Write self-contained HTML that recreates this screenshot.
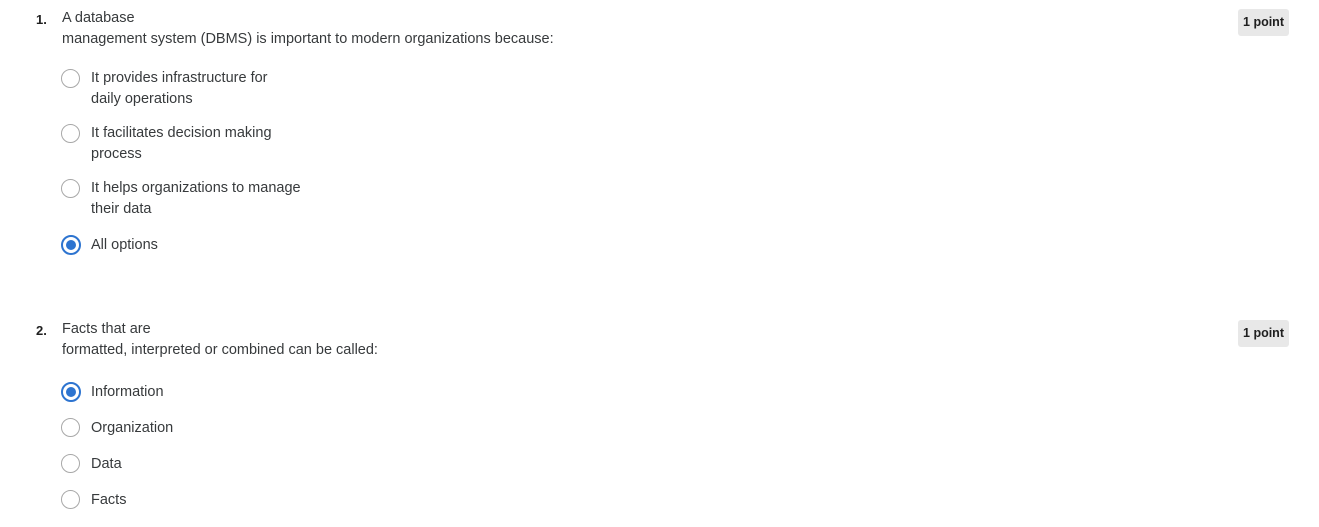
<!DOCTYPE html>
<html><head><meta charset="utf-8"><style>
body{margin:0;width:1319px;height:527px;background:#fff;font-family:"Liberation Sans",sans-serif;color:#373a3c;position:relative;overflow:hidden}
.t{position:absolute;font-size:14.5px;line-height:21px;white-space:nowrap}
.n{position:absolute;font-size:13px;font-weight:bold;color:#1f1f1f}
.b{position:absolute;left:1238px;width:51px;height:27px;background:#e8e8e8;border-radius:3px;font-size:12.5px;font-weight:bold;color:#1f1f1f;text-align:center;line-height:27px}
.r{position:absolute;left:61px;width:17px;height:17px;border:1.5px solid #a8a8a8;border-radius:50%;background:#fff}
.r.s{border:2px solid #2d74d0;width:16px;height:16px}
.r.s::after{content:"";position:absolute;left:3px;top:3px;width:10px;height:10px;border-radius:50%;background:#2d74d0}
</style></head><body>
<div class="n" style="left:36px;top:12px">1.</div>
<div class="t" style="left:62px;top:8px">A database<br>management system (DBMS) is important to modern organizations because:</div>
<div class="b" style="top:9px">1 point</div>
<div class="r" style="top:69px"></div><div class="t" style="left:91px;top:68px">It provides infrastructure for<br>daily operations</div>
<div class="r" style="top:124px"></div><div class="t" style="left:91px;top:123px">It facilitates decision making<br>process</div>
<div class="r" style="top:179px"></div><div class="t" style="left:91px;top:178px">It helps organizations to manage<br>their data</div>
<div class="r s" style="top:235px"></div><div class="t" style="left:91px;top:235px">All options</div>

<div class="n" style="left:36px;top:323px">2.</div>
<div class="t" style="left:62px;top:319px">Facts that are<br>formatted, interpreted or combined can be called:</div>
<div class="b" style="top:320px">1 point</div>
<div class="r s" style="top:382px"></div><div class="t" style="left:91px;top:382px">Information</div>
<div class="r" style="top:418px"></div><div class="t" style="left:91px;top:418px">Organization</div>
<div class="r" style="top:454px"></div><div class="t" style="left:91px;top:454px">Data</div>
<div class="r" style="top:490px"></div><div class="t" style="left:91px;top:490px">Facts</div>
</body></html>
